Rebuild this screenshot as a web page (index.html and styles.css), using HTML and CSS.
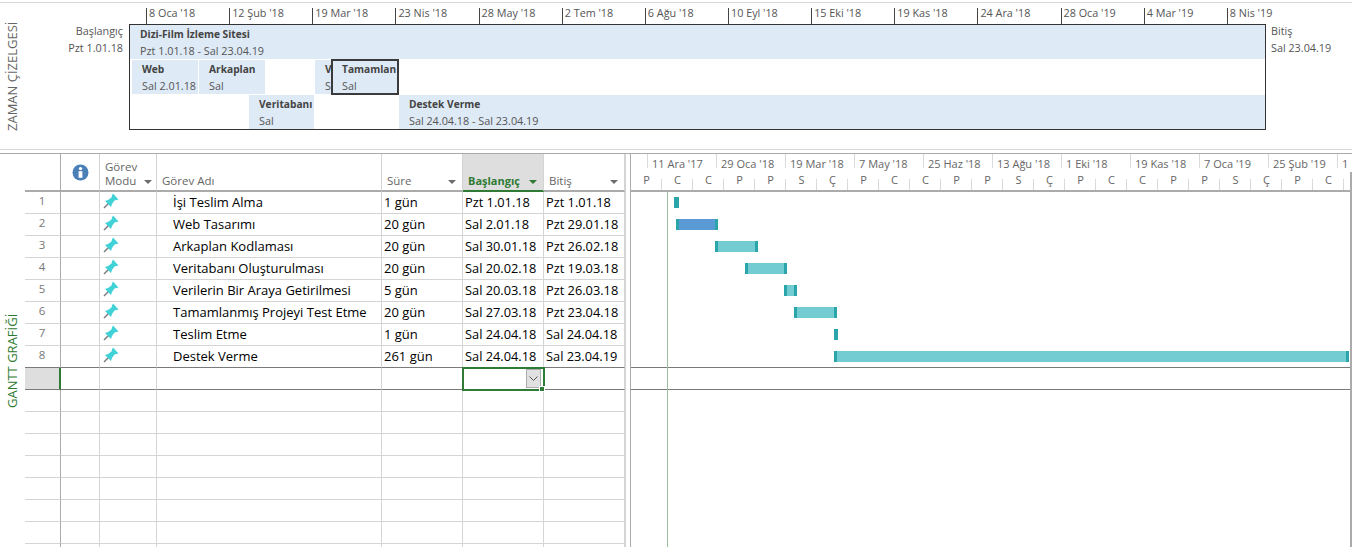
FILE: index.html
```html
<!DOCTYPE html>
<html lang="tr">

<head>
    <meta charset="UTF-8">
    <title>Dizi-Film İzleme Sitesi</title>
    <link rel="stylesheet" href="styles.css">
</head>

<body>
    <svg class="icon-defs" width="0" height="0">
        <symbol id="pin" viewBox="0 0 16 16">
            <path d="M1 15 L6 10" stroke="#7b7b7b" stroke-width="1.4" fill="none"/>
            <path d="M10 0.5 L15.5 6.5 L13.5 7 L11.5 7.5 L9 11 L8 14 L2 8 L5 7 L8.5 4.5 L9 2.5 Z" fill="#41d2d8"/>
        </symbol>
    </svg>

    <section class="timeline">
        <div class="side-label">ZAMAN ÇİZELGESİ</div>
        <div class="tl-edge tl-start">
            <span>Başlangıç</span>
            <span>Pzt 1.01.18</span>
        </div>
        <div class="tl-main">
            <div class="ruler">
                <span>8 Oca '18</span>
                <span>12 Şub '18</span>
                <span>19 Mar '18</span>
                <span>23 Nis '18</span>
                <span>28 May '18</span>
                <span>2 Tem '18</span>
                <span>6 Ağu '18</span>
                <span>10 Eyl '18</span>
                <span>15 Eki '18</span>
                <span>19 Kas '18</span>
                <span>24 Ara '18</span>
                <span>28 Oca '19</span>
                <span>4 Mar '19</span>
                <span>8 Nis '19</span>
            </div>
            <div class="tl-box">
                <div class="tl-item row-a" style="left: 0; width: 1135px;"><b>Dizi-Film İzleme Sitesi</b><span>Pzt 1.01.18 - Sal 23.04.19</span></div>
                <div class="tl-item row-b" style="left: 2px; width: 66px;"><b>Web</b><span>Sal 2.01.18</span></div>
                <div class="tl-item row-b" style="left: 69px; width: 66px;"><b>Arkaplan</b><span>Sal</span></div>
                <div class="tl-item row-b" style="left: 185px; width: 16px;"><b>V</b><span>S</span></div>
                <div class="tl-item tl-selected" style="left: 201px; width: 68px;"><b>Tamamlan</b><span>Sal</span></div>
                <div class="tl-item row-c" style="left: 119px; width: 65px;"><b>Veritabanı</b><span>Sal</span></div>
                <div class="tl-item row-c" style="left: 269px; width: 866px;"><b>Destek Verme</b><span>Sal 24.04.18 - Sal 23.04.19</span></div>
            </div>
        </div>
        <div class="tl-edge tl-end">
            <span>Bitiş</span>
            <span>Sal 23.04.19</span>
        </div>
    </section>

    <section class="gantt-view">
        <div class="side-label side-label-green">GANTT GRAFİĞİ</div>

        <table class="sheet">
            <colgroup>
                <col class="c-num">
                <col class="c-info">
                <col class="c-mode">
                <col class="c-name">
                <col class="c-dur">
                <col class="c-date">
                <col class="c-date">
            </colgroup>
            <thead>
                <tr>
                    <th class="num"></th>
                    <th class="th-info">
                        <svg width="17" height="17" viewBox="0 0 17 17">
                            <circle cx="8.5" cy="8.5" r="8" fill="#4a7fb8"/>
                            <circle cx="8.5" cy="4.6" r="1.7" fill="#fff"/>
                            <rect x="6.6" y="7.2" width="3.8" height="6.6" fill="#fff"/>
                        </svg>
                    </th>
                    <th><div class="th-in th-mode"><span>Görev<br>Modu</span><i class="arrow"></i></div></th>
                    <th><div class="th-in"><span>Görev Adı</span></div></th>
                    <th><div class="th-in"><span>Süre</span><i class="arrow"></i></div></th>
                    <th class="th-active"><div class="th-in"><span>Başlangıç</span><i class="arrow"></i></div></th>
                    <th><div class="th-in"><span>Bitiş</span><i class="arrow"></i></div></th>
                </tr>
            </thead>
            <tbody>
                <tr>
                    <td class="num">1</td><td></td><td class="pin-cell"><svg><use href="#pin"/></svg></td>
                    <td class="task">İşi Teslim Alma</td><td>1 gün</td><td class="date">Pzt 1.01.18</td><td class="date">Pzt 1.01.18</td>
                </tr>
                <tr>
                    <td class="num">2</td><td></td><td class="pin-cell"><svg><use href="#pin"/></svg></td>
                    <td class="task">Web Tasarımı</td><td>20 gün</td><td class="date">Sal 2.01.18</td><td class="date">Pzt 29.01.18</td>
                </tr>
                <tr>
                    <td class="num">3</td><td></td><td class="pin-cell"><svg><use href="#pin"/></svg></td>
                    <td class="task">Arkaplan Kodlaması</td><td>20 gün</td><td class="date">Sal 30.01.18</td><td class="date">Pzt 26.02.18</td>
                </tr>
                <tr>
                    <td class="num">4</td><td></td><td class="pin-cell"><svg><use href="#pin"/></svg></td>
                    <td class="task">Veritabanı Oluşturulması</td><td>20 gün</td><td class="date">Sal 20.02.18</td><td class="date">Pzt 19.03.18</td>
                </tr>
                <tr>
                    <td class="num">5</td><td></td><td class="pin-cell"><svg><use href="#pin"/></svg></td>
                    <td class="task">Verilerin Bir Araya Getirilmesi</td><td>5 gün</td><td class="date">Sal 20.03.18</td><td class="date">Pzt 26.03.18</td>
                </tr>
                <tr>
                    <td class="num">6</td><td></td><td class="pin-cell"><svg><use href="#pin"/></svg></td>
                    <td class="task">Tamamlanmış Projeyi Test Etme</td><td>20 gün</td><td class="date">Sal 27.03.18</td><td class="date">Pzt 23.04.18</td>
                </tr>
                <tr>
                    <td class="num">7</td><td></td><td class="pin-cell"><svg><use href="#pin"/></svg></td>
                    <td class="task">Teslim Etme</td><td>1 gün</td><td class="date">Sal 24.04.18</td><td class="date">Sal 24.04.18</td>
                </tr>
                <tr class="before-current">
                    <td class="num">8</td><td></td><td class="pin-cell"><svg><use href="#pin"/></svg></td>
                    <td class="task">Destek Verme</td><td>261 gün</td><td class="date">Sal 24.04.18</td><td class="date">Sal 23.04.19</td>
                </tr>
                <tr class="current">
                    <td class="num"></td><td></td><td></td><td></td><td></td>
                    <td class="cell-active">
                        <span class="cell-btn">
                            <svg width="9" height="5" viewBox="0 0 9 5"><path d="M0.5 0.5 L4.5 4.5 L8.5 0.5" stroke="#555" fill="none"/></svg>
                        </span>
                        <span class="cell-handle"></span>
                    </td>
                    <td></td>
                </tr>
                <tr><td class="num"></td><td></td><td></td><td></td><td></td><td></td><td></td></tr>
                <tr><td class="num"></td><td></td><td></td><td></td><td></td><td></td><td></td></tr>
                <tr><td class="num"></td><td></td><td></td><td></td><td></td><td></td><td></td></tr>
                <tr><td class="num"></td><td></td><td></td><td></td><td></td><td></td><td></td></tr>
                <tr><td class="num"></td><td></td><td></td><td></td><td></td><td></td><td></td></tr>
                <tr><td class="num"></td><td></td><td></td><td></td><td></td><td></td><td></td></tr>
                <tr><td class="num"></td><td></td><td></td><td></td><td></td><td></td><td></td></tr>
                <tr><td class="num"></td><td></td><td></td><td></td><td></td><td></td><td></td></tr>
            </tbody>
        </table>

        <div class="splitter"></div>

        <div class="chart">
            <div class="tier-top">
                <span class="tier-first"></span>
                <span>11 Ara '17</span>
                <span>29 Oca '18</span>
                <span>19 Mar '18</span>
                <span>7 May '18</span>
                <span>25 Haz '18</span>
                <span>13 Ağu '18</span>
                <span>1 Eki '18</span>
                <span>19 Kas '18</span>
                <span>7 Oca '19</span>
                <span>25 Şub '19</span>
                <span>1</span>
            </div>
            <div class="tier-low">
                <span>P</span><span>C</span><span>C</span><span>P</span><span>P</span><span>S</span><span>Ç</span>
                <span>P</span><span>C</span><span>C</span><span>P</span><span>P</span><span>S</span><span>Ç</span>
                <span>P</span><span>C</span><span>C</span><span>P</span><span>P</span><span>S</span><span>Ç</span>
                <span>P</span><span>C</span>
            </div>
            <div class="chart-body">
                <div class="today-line"></div>
                <div class="chart-row"><div class="bar bar-short" style="margin-left: 43px; width: 5px;"></div></div>
                <div class="chart-row"><div class="bar bar-blue" style="margin-left: 45px; width: 42px;"></div></div>
                <div class="chart-row"><div class="bar" style="margin-left: 84px; width: 43px;"></div></div>
                <div class="chart-row"><div class="bar" style="margin-left: 114px; width: 42px;"></div></div>
                <div class="chart-row"><div class="bar" style="margin-left: 153px; width: 13px;"></div></div>
                <div class="chart-row"><div class="bar" style="margin-left: 163px; width: 43px;"></div></div>
                <div class="chart-row"><div class="bar bar-short" style="margin-left: 203px; width: 4px;"></div></div>
                <div class="chart-row chart-row-line"><div class="bar" style="margin-left: 203px; width: 515px;"></div></div>
                <div class="chart-row chart-row-line"></div>
            </div>
        </div>
    </section>
</body>

</html>
```

FILE: styles.css
```css
* {
    box-sizing: border-box;
}

html,
body {
    height: 100%;
}

body {
    margin: 0;
    overflow: hidden;
    background: #fff;
    color: #000;
    font-family: "Open Sans", "Noto Sans", sans-serif;
    font-size: 13px;
}

.icon-defs {
    display: block;
}

.side-label {
    width: 25px;
    flex: none;
    display: flex;
    align-items: center;
    justify-content: center;
    padding-left: 2px;
    writing-mode: vertical-rl;
    transform: rotate(180deg);
    font-size: 13px;
    color: #666;
    white-space: nowrap;
}

.side-label-green {
    color: #2f7a34;
    padding-bottom: 20px;
}

/* timeline */
.timeline {
    display: flex;
    height: 148px;
    margin-top: 2px;
    border-top: 1px solid #d6d6d6;
    border-bottom: 1px solid #d6d6d6;
    color: #555;
    font-size: 10.8px;
}

.tl-edge {
    display: flex;
    flex-direction: column;
    padding-top: 19px;
    line-height: 17px;
}

.tl-start {
    width: 104px;
    flex: none;
    padding-right: 6px;
    text-align: right;
}

.tl-end {
    padding-left: 5px;
}

.tl-main {
    width: 1137px;
    flex: none;
}

.ruler {
    display: flex;
    height: 21px;
    padding-top: 5px;
    padding-left: 17px;
}

.ruler span {
    width: 83.15px;
    flex: none;
    height: 16px;
    padding-left: 2px;
    border-left: 1px solid #444;
    line-height: 10px;
    white-space: nowrap;
}

.tl-box {
    position: relative;
    height: 106px;
    border: 1px solid #333;
}

.tl-item {
    position: absolute;
    height: 34px;
    padding: 0 0 0 10px;
    background: #deeaf6;
    overflow: hidden;
    white-space: nowrap;
    line-height: 17px;
}

.tl-item b,
.tl-item span {
    display: block;
}

.tl-item b {
    padding-top: 1px;
    margin-bottom: -1px;
    color: #444;
    font-size: 10.2px;
}

.row-a {
    top: 0;
}

.row-b {
    top: 35px;
}

.row-c {
    top: 70px;
}

.tl-selected {
    top: 34px;
    height: 36px;
    padding: 0 0 0 9px;
    border: 2px solid #3b3b3b;
    background: #deeaf6;
}

.tl-selected b {
    padding-top: 0;
}

/* lower part */
.gantt-view {
    display: flex;
    height: 394px;
    margin-top: 3px;
    border-top: 1px solid #ababab;
    overflow: hidden;
}

.sheet {
    width: 600px;
    flex: none;
    align-self: flex-start;
    table-layout: fixed;
    border-collapse: separate;
    border-spacing: 0;
}

.c-num {
    width: 36px;
}

.c-info {
    width: 39px;
}

.c-mode {
    width: 57px;
}

.c-name {
    width: 225px;
}

.c-dur {
    width: 81px;
}

.c-date {
    width: 81px;
}

th {
    height: 38px;
    padding: 0;
    border-right: 1px solid #d4d4d4;
    border-bottom: 2px solid #ababab;
    color: #666;
    font-size: 11.5px;
    font-weight: normal;
    text-align: left;
    vertical-align: bottom;
}

.th-in {
    display: flex;
    align-items: flex-end;
    justify-content: space-between;
    padding: 0 6px 2px 5px;
    line-height: 14px;
}

.th-mode {
    padding-left: 5px;
    padding-right: 4px;
}

.arrow {
    width: 0;
    height: 0;
    margin-bottom: 4px;
    border-left: 4px solid transparent;
    border-right: 4px solid transparent;
    border-top: 4px solid #6d6d6d;
}

.th-info {
    padding: 0 0 6px 11px;
    vertical-align: bottom;
}

.th-active {
    background: #dedede;
    border-bottom-color: #2f7a34;
    color: #2f7a34;
    font-size: 11px;
    font-weight: bold;
}

.th-active .th-in {
    padding-left: 5px;
}

.th-active .arrow {
    border-top-color: #2f7a34;
}

td {
    height: 22px;
    padding: 0 0 1px 2px;
    border-right: 1px solid #d4d4d4;
    border-bottom: 1px solid #d4d4d4;
    line-height: 18px;
    white-space: nowrap;
    overflow: hidden;
}

td.date {
    font-size: 12.8px;
}

td.num,
th.num {
    border-right: 1px solid #ababab;
    color: #777;
    font-size: 11.5px;
    line-height: 17px;
    text-align: center;
    vertical-align: top;
    padding: 0 1px 0 0;
}

td.task {
    padding-left: 16px;
}

.pin-cell {
    padding: 0;
    overflow: visible;
}

.pin-cell svg {
    display: block;
    width: 16px;
    height: 16px;
    margin: -3px 0 0 3px;
}

.before-current td,
.current td {
    border-bottom-color: #7a7a7a;
}

.current .num {
    background: #dedede;
    border-right: 2px solid #2f7a34;
}

td.cell-active {
    position: relative;
    overflow: visible;
    outline: 2px solid #2f7a34;
    outline-offset: -1px;
    border-right-color: transparent;
}

.cell-btn {
    position: absolute;
    right: 2px;
    top: 1px;
    display: flex;
    align-items: center;
    justify-content: center;
    width: 15px;
    height: 19px;
    background: #e1e1e1;
    border: 1px solid #adadad;
}

.cell-handle {
    position: absolute;
    right: -2px;
    bottom: -3px;
    width: 6px;
    height: 6px;
    background: #2f7a34;
    border: 1px solid #fff;
}

.splitter {
    width: 6px;
    flex: none;
    border-left: 1px solid #d4d4d4;
    border-right: 1px solid #ababab;
}

/* gantt chart */
.chart {
    flex: 1;
    min-width: 0;
    display: flex;
    flex-direction: column;
}

.tier-top,
.tier-low {
    display: flex;
    color: #666;
    font-size: 11px;
    overflow: hidden;
    white-space: nowrap;
}

.tier-top {
    height: 18px;
    line-height: 20px;
}

.tier-top span {
    width: 69px;
    flex: none;
    padding-left: 5px;
    background: linear-gradient(#dadada, #dadada) left top / 1px 14px no-repeat;
}

.tier-top .tier-first {
    width: 16px;
    padding: 0;
    background: none;
}

.tier-low {
    height: 20px;
    line-height: 15px;
    border-right: 2px solid #ababab;
    border-bottom: 2px solid #ababab;
}

.tier-low span {
    width: 31px;
    flex: none;
    text-align: center;
    background: linear-gradient(#dadada, #dadada) right bottom / 1px 11px no-repeat;
}

.chart-body {
    position: relative;
    flex: 1;
    border-right: 2px solid #ababab;
}

.today-line {
    position: absolute;
    left: 36px;
    top: 0;
    bottom: 0;
    width: 1px;
    background: #9dbf9d;
}

.chart-row {
    height: 22px;
    padding-top: 5px;
    border-bottom: 1px solid transparent;
}

.chart-row-line {
    border-bottom-color: #7a7a7a;
}

.bar {
    height: 11px;
    background: #74ccd3;
    border-left: 3px solid #2aa5aa;
    border-right: 3px solid #2aa5aa;
}

.bar-blue {
    background: #5b9bd5;
}

.bar-short {
    background: #2aa5aa;
    border: none;
}
```
